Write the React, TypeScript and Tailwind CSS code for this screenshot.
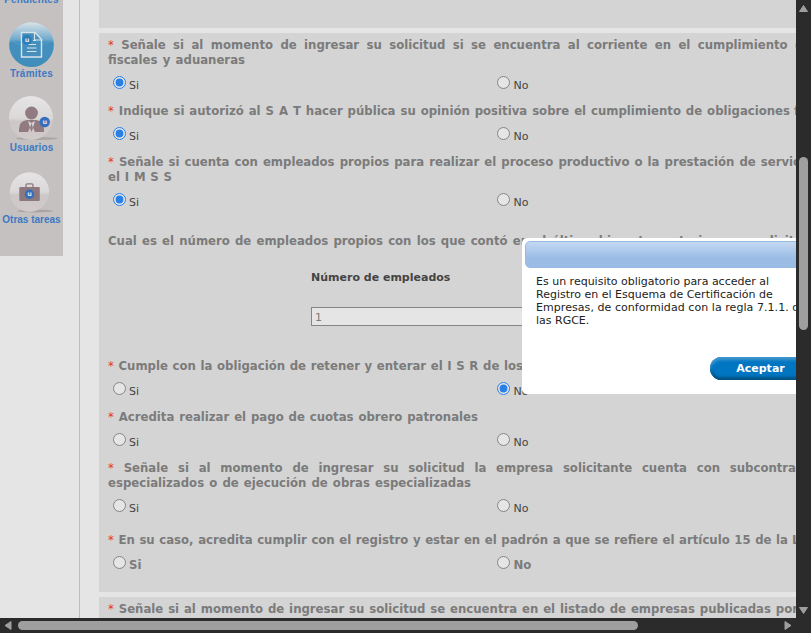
import type { ReactNode } from "react";

function Radio({ checked = false }: { checked?: boolean }) {
  return (
    <svg viewBox="0 0 13 13" className="h-[13px] w-[13px] shrink-0">
      <circle cx="6.5" cy="6.5" r="6" fill="#e5e5e5" stroke={checked ? "#2b80e6" : "#858585"} strokeWidth="1" />
      {checked && <circle cx="6.5" cy="6.5" r="3.9" fill="#2b80e6" />}
    </svg>
  );
}

function Answers({ value, bold = false }: { value?: "si" | "no"; bold?: boolean }) {
  const label = bold
    ? "mt-[10px] text-[13px] leading-[15px] font-bold text-[#7b7b7b] [font-stretch:condensed]"
    : "mt-[12px] text-[11px] leading-[14px] text-[#444]";
  return (
    <div className="flex h-9 pl-[5px]">
      <div className="flex w-[384px] items-start gap-[3px]">
        <div className="pt-[9px]"><Radio checked={value === "si"} /></div>
        <span className={label}>Si</span>
      </div>
      <div className="flex items-start gap-[3.5px]">
        <div className="pt-[9px]"><Radio checked={value === "no"} /></div>
        <span className={label}>No</span>
      </div>
    </div>
  );
}

// The measured part of a line is justified to its width; the tail runs on past the viewport.
function Line({ width, tail, children }: { width: string; tail?: string; children: ReactNode }) {
  return (
    <div className="flex h-[15px] whitespace-nowrap text-[13px] leading-[15px] font-bold text-[#7b7b7b] [font-stretch:condensed]">
      <div className={`${width} shrink-0 text-justify [text-align-last:justify]`}>{children}</div>
      {tail && <span>{tail}</span>}
    </div>
  );
}

const Star = () => <span className="font-normal text-[#e43434]">*</span>;

function Label({ children, className }: { children: ReactNode; className: string }) {
  return <div className={`text-center font-['Liberation_Sans',sans-serif] text-[10px] leading-[12px] font-bold whitespace-nowrap text-[#3d79c4] ${className}`}>{children}</div>;
}

function Sidebar() {
  return (
    <aside className="h-[256px] w-[63px] shrink-0 overflow-hidden bg-[#c5c1c0]">
      <Label className="-mt-[6px] h-[12px] tracking-[0.1px]">Pendientes</Label>
      <svg viewBox="0 0 63 62" className="block h-[62px] w-[63px]">
        <defs>
          <linearGradient id="blue" x1="0" y1="0" x2="0" y2="1">
            <stop offset="0" stopColor="#d7e3e7" /><stop offset=".38" stopColor="#72aacd" />
            <stop offset=".45" stopColor="#438fbf" /><stop offset="1" stopColor="#418dba" />
          </linearGradient>
        </defs>
        <circle cx="31.5" cy="38.7" r="22.4" fill="url(#blue)" />
        <path d="M11 35Q31.5 45 52 35" fill="none" stroke="#5d9fc7" strokeWidth=".8" />
        <path d="M21.5 26.5H35l6.5 7V51h-20z" fill="#468fbc" stroke="#d9e4e9" strokeWidth="1.4" />
        <path d="M34.5 27v7H41M27 38.5h9M27 42h9.5M27 45.5h9.5M33 34.5h3" fill="none" stroke="#d9e4e9" strokeWidth="1.2" />
        <circle cx="27" cy="34" r="4.9" fill="#2c7ebb" />
        <text x="27" y="36.2" fontSize="6.5" fontWeight="bold" fill="#dbe8ef" textAnchor="middle">u</text>
      </svg>
      <Label className="h-[12px] tracking-[0.25px]">Trámites</Label>
      <svg viewBox="0 0 63 61" className="block h-[61px] w-[63px]">
        <defs>
          <linearGradient id="pearl" x1="0" y1="0" x2="0" y2="1">
            <stop offset="0" stopColor="#e6e4e4" /><stop offset=".5" stopColor="#dad8d8" />
            <stop offset=".58" stopColor="#cdc8c8" /><stop offset="1" stopColor="#d2c9ca" />
          </linearGradient>
        </defs>
        <ellipse cx="37" cy="58.5" rx="21" ry="1.5" fill="#aaa5a4" />
        <circle cx="31" cy="38" r="22" fill="url(#pearl)" />
        <circle cx="31.5" cy="33" r="6.4" fill="#917b80" />
        <path d="M19 52v-3q0-8 8-9h9q8 1 8 9v3h-9l-3.5-8-3.5 8z" fill="#917b80" />
        <path d="M28 41l3.5 11L35 41l-3.5 2z" fill="#d9d4d4" /><path d="M31.5 43l-1.5 5 1.5 4 1.5-4z" fill="#917b80" />
        <circle cx="44.7" cy="42" r="5.2" fill="#336fbd" />
        <text x="44.7" y="44" fontSize="6.5" fontWeight="bold" fill="#e0e6ed" textAnchor="middle">u</text>
      </svg>
      <Label className="h-[12px] pt-px tracking-[0.1px]">Usuarios</Label>
      <svg viewBox="0 0 63 60" className="block h-[60px] w-[63px]">
        <ellipse cx="35" cy="58" rx="18" ry="1.4" fill="#aaa5a4" />
        <circle cx="29.5" cy="39" r="19.7" fill="url(#pearl)" />
        <path d="M26 34v-2q0-1.2 1.2-1.2h4.6q1.2 0 1.2 1.2v2" fill="none" stroke="#8c787d" strokeWidth="1.3" />
        <rect x="19.3" y="34" width="20.5" height="14" rx="1" fill="#8c787d" />
        <circle cx="29.5" cy="41.2" r="4.7" fill="#336fbd" />
        <text x="29.5" y="43.2" fontSize="6.5" fontWeight="bold" fill="#e0e6ed" textAnchor="middle">u</text>
      </svg>
      <Label className="h-[12px] pt-px text-[9.5px]">Otras tareas</Label>
    </aside>
  );
}

function Dialog() {
  return (
    <div className="absolute top-[238px] left-[522px] h-[156px] w-[300px] rounded-[5px] bg-white p-[3px] text-[11px]">
      <div className="h-[27px] rounded-[5px] border border-[#97bae3] bg-linear-to-b from-[#c4d8f1] to-[#9abce5] to-65%" />
      <p className="h-[86px] pt-[7px] pl-[11px] leading-[13px] whitespace-nowrap text-[#222]">
        Es un requisito obligatorio para acceder al<br />
        Registro en el Esquema de Certificación de<br />
        <span className="tracking-[0.06px]">Empresas, de conformidad con la regla 7.1.1. de</span><br />
        las RGCE.
      </p>
      <button className="mt-[3px] ml-[185px] flex h-[23px] w-[101px] items-center justify-center rounded-full bg-[#0076c2] pt-[2px] font-bold text-white shadow-[inset_0_3px_3px_#4197ce,inset_0_-3px_3px_#005181]">
        Aceptar
      </button>
    </div>
  );
}

export default function App() {
  return (
    <div className="flex h-[633px] w-[811px] flex-col overflow-hidden bg-[#2b2b2b] font-['DejaVu_Sans',sans-serif]">
      <div className="flex h-[618px]">
        <div className="relative flex w-[796px] overflow-hidden bg-[#e5e5e5]">
          <Sidebar />
          <div className="ml-[16px] w-px shrink-0 bg-[#bdbdbd]" />
          <main className="ml-[19px] w-[697px] shrink-0">
            <div className="h-7 bg-[#d4d4d4]" />
            <section className="mt-[5px] h-[559px] bg-[#d4d4d4] pt-1 pl-[9px]">
              <Line width="w-[687px]"><Star /> Señale si al momento de ingresar su solicitud si se encuentra al corriente en el cumplimiento <span className="inline-block w-0">de</span></Line>
              <Line width="w-[137px]">fiscales y aduaneras</Line>
              <Answers value="si" />
              <Line width="w-[682px]" tail="&nbsp;fiscales"><Star /> Indique si autorizó al S A T hacer pública su opinión positiva sobre el cumplimiento de obligaciones</Line>
              <Answers value="si" />
              <Line width="w-[711px]"><Star /> Señale si cuenta con empleados propios para realizar el proceso productivo o la prestación de servicios</Line>
              <Line width="w-[64px]">el I M S S</Line>
              <Answers value="si" />
              <div className="h-[13px]" />
              <Line width="w-[703px]">Cual es el número de empleados propios con los que contó en el último bimestre anterior a su solicitud</Line>
              <div className="mt-[23px] ml-[203px] h-[14px] text-[11px] leading-[14px] font-bold text-[#444]">
                <span className="inline-block w-[139px] whitespace-nowrap">Número de empleados</span>
              </div>
              <div className="mt-[22px] ml-[203px] h-[19px] w-[250px] border border-[#858585] bg-[#e5e5e5] pt-px pl-[3px] text-[11px] leading-[17px] text-[#7b7b7b]">1</div>
              <div className="h-8" />
              <Line width="w-[415px]" tail="&nbsp;trabajadores"><Star /> Cumple con la obligación de retener y enterar el I S R de los</Line>
              <Answers value="no" />
              <Line width="w-[370px]"><Star /> Acredita realizar el pago de cuotas obrero patronales</Line>
              <Answers />
              <Line width="w-[688px]"><Star /> Señale si al momento de ingresar su solicitud la empresa solicitante cuenta con subcontra</Line>
              <Line width="w-[363px]">especializados o de ejecución de obras especializadas</Line>
              <Answers />
              <div className="h-[6px]" />
              <Line width="w-[680px]" tail="&nbsp;Ley"><Star /> En su caso, acredita cumplir con el registro y estar en el padrón a que se refiere el artículo 15 de la</Line>
              <Answers bold />
            </section>
            <section className="mt-[5px] h-[21px] bg-[#d4d4d4] pt-1 pl-[9px]">
              <Line width="w-[690px]"><Star /> Señale si al momento de ingresar su solicitud se encuentra en el listado de empresas publicadas por</Line>
            </section>
          </main>
          <Dialog />
        </div>
        <div className="flex w-[15px] flex-col items-center">
          <svg viewBox="0 0 15 16" className="h-4 w-[15px]"><path d="M7.5 5.5L11.5 11.5H3.5z" fill="#9f9f9f" stroke="#9f9f9f" strokeLinejoin="round" /></svg>
          <div className="mt-[141px] h-[173px] w-[9px] rounded-full bg-[#9f9f9f]" />
          <svg viewBox="0 0 15 16" className="mt-[272px] h-4 w-[15px]"><path d="M7.5 11.5L3.5 5.5h8z" fill="#9f9f9f" stroke="#9f9f9f" strokeLinejoin="round" /></svg>
        </div>
      </div>
      <div className="flex h-[15px] items-center">
        <svg viewBox="0 0 18 15" className="h-[15px] w-[18px]"><path d="M5 7.5L11 3.5v8z" fill="#9f9f9f" stroke="#9f9f9f" strokeLinejoin="round" /></svg>
        <div className="h-[9px] w-[620px] rounded-full bg-[#9f9f9f]" />
        <svg viewBox="0 0 15 15" className="ml-[142px] h-[15px] w-[15px]"><path d="M11 7.5L5 3.5v8z" fill="#9f9f9f" stroke="#9f9f9f" strokeLinejoin="round" /></svg>
      </div>
    </div>
  );
}
